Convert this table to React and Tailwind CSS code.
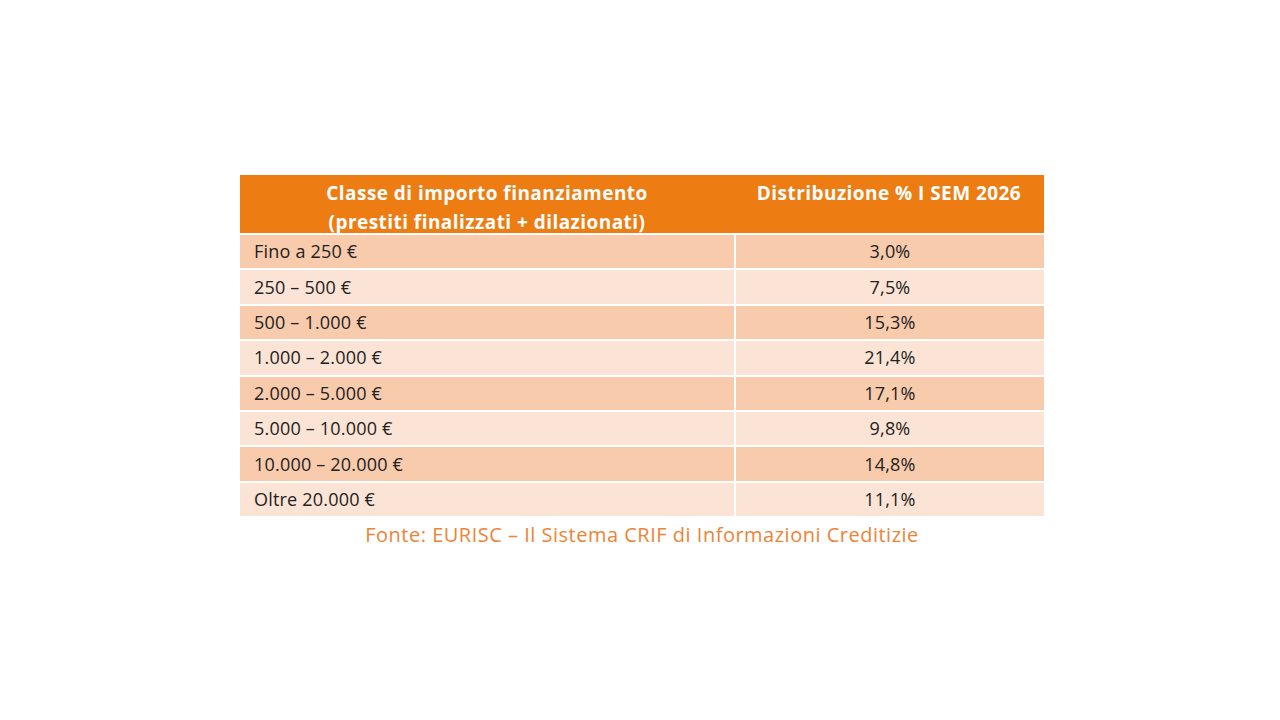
import React from 'react';

const rows = [
  ['Fino a 250 €', '3,0%'],
  ['250 – 500 €', '7,5%'],
  ['500 – 1.000 €', '15,3%'],
  ['1.000 – 2.000 €', '21,4%'],
  ['2.000 – 5.000 €', '17,1%'],
  ['5.000 – 10.000 €', '9,8%'],
  ['10.000 – 20.000 €', '14,8%'],
  ['Oltre 20.000 €', '11,1%'],
];

const App = () => {
  return (
    <div className="w-[1280px] h-[720px] bg-white flex flex-col items-center pt-[175px] pl-[4px] font-['Open_Sans','Lato',sans-serif]">
      <div className="w-[804px]">
        {/* Header */}
        <div className="flex h-[58px] bg-[#ED7D12] text-white font-bold text-[19px] tracking-[0.45px] leading-[29px]">
          <div className="w-[494px] text-center pt-[4px]">
            Classe di importo finanziamento
            <br />
            (prestiti finalizzati + dilazionati)
          </div>
          <div className="flex-1 text-center pt-[4px]">Distribuzione % I SEM 2026</div>
        </div>

        {/* Body */}
        {rows.map(([range, pct], i) => (
          <div
            key={i}
            className={`flex h-[35.4px] border-t-2 border-white text-[18px] tracking-[0.2px] text-[#222] ${i % 2 === 0 ? 'bg-[#F8CBAD]' : 'bg-[#FBE4D5]'}`}
          >
            <div className="w-[494px] pl-[14px] flex items-center">{range}</div>
            <div className="flex-1 border-l-2 border-white flex items-center justify-center">{pct}</div>
          </div>
        ))}
      </div>
      <p className="mt-[4px] text-[20px] tracking-[0.5px] text-[#EE8436]">
        Fonte: EURISC – Il Sistema CRIF di Informazioni Creditizie
      </p>
    </div>
  );
};

export default App;
